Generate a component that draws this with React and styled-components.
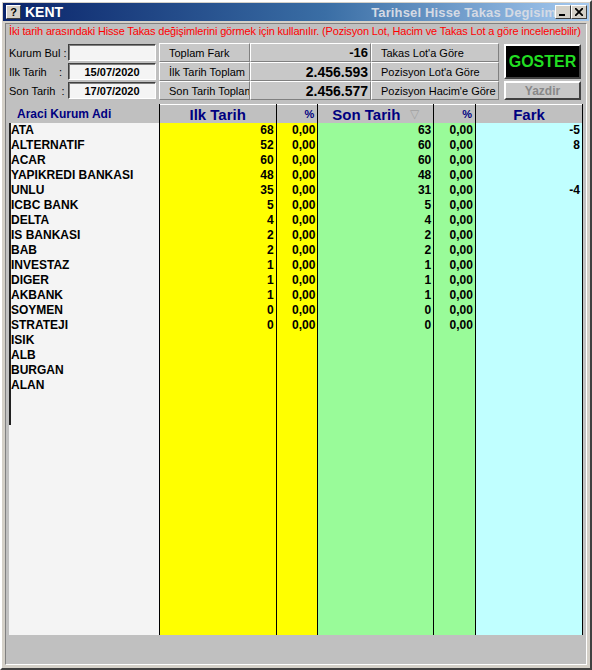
import React from 'react'
import styled, { createGlobalStyle } from 'styled-components'

const Global = createGlobalStyle`
  body{
    margin:0;
    background:#c0c0c0;
    font-family:"Liberation Sans", Arial, sans-serif;
  }
`

const rows = [
  ['ATA', '68', '0,00', '63', '0,00', '-5'],
  ['ALTERNATIF', '52', '0,00', '60', '0,00', '8'],
  ['ACAR', '60', '0,00', '60', '0,00', ''],
  ['YAPIKREDI BANKASI', '48', '0,00', '48', '0,00', ''],
  ['UNLU', '35', '0,00', '31', '0,00', '-4'],
  ['ICBC BANK', '5', '0,00', '5', '0,00', ''],
  ['DELTA', '4', '0,00', '4', '0,00', ''],
  ['IS BANKASI', '2', '0,00', '2', '0,00', ''],
  ['BAB', '2', '0,00', '2', '0,00', ''],
  ['INVESTAZ', '1', '0,00', '1', '0,00', ''],
  ['DIGER', '1', '0,00', '1', '0,00', ''],
  ['AKBANK', '1', '0,00', '1', '0,00', ''],
  ['SOYMEN', '0', '0,00', '0', '0,00', ''],
  ['STRATEJI', '0', '0,00', '0', '0,00', ''],
  ['ISIK', '', '', '', '', ''],
  ['ALB', '', '', '', '', ''],
  ['BURGAN', '', '', '', '', ''],
  ['ALAN', '', '', '', '', ''],
]

const columns = [
  { title: 'Ilk Tarih', width: 117, bg: '#ffff00', big: true },
  { title: '%', width: 41, bg: '#ffff00' },
  { title: 'Son Tarih', width: 116, bg: '#99fb99', big: true, sort: true },
  { title: '%', width: 41, bg: '#99fb99' },
  { title: 'Fark', width: 107, bg: '#c0ffff', big: true, last: true },
]

const App = () => {
  return (
    <Window>
      <Global />
      <TitleBar>
        <HelpIcon>?</HelpIcon>
        <AppName>KENT</AppName>
        <Caption>Tarihsel Hisse Takas Degisimi</Caption>
        <WinButtons>
          <WinBtn>
            <svg width="8" height="8" viewBox="0 0 8 8"><rect x="0" y="6" width="6" height="2" fill="#000" /></svg>
          </WinBtn>
          <WinBtn>
            <svg width="8" height="8" viewBox="0 0 8 8"><path d="M0 0L8 8M8 0L0 8" stroke="#000" strokeWidth="1.8" /></svg>
          </WinBtn>
        </WinButtons>
      </TitleBar>
      <Body>
        <Hint>İki tarih arasındaki Hisse Takas değişimlerini görmek için kullanılır. (Pozisyon Lot, Hacim ve Takas Lot a göre incelenebilir)</Hint>
        <Controls>
          <Label>Kurum Bul :</Label>
          <Input />
          <Btn>Toplam Fark</Btn>
          <Value small>-16</Value>
          <Btn>Takas Lot'a Göre</Btn>
          <Goster>GOSTER</Goster>

          <Label>Ilk Tarih&nbsp;&nbsp;&nbsp;&nbsp;:</Label>
          <Input>15/07/2020</Input>
          <Btn>İlk Tarih Toplam</Btn>
          <Value>2.456.593</Value>
          <Btn>Pozisyon Lot'a Göre</Btn>

          <Label>Son Tarih&nbsp;&nbsp;:</Label>
          <Input>17/07/2020</Input>
          <Btn>Son Tarih Toplam</Btn>
          <Value>2.456.577</Value>
          <Btn>Pozisyon Hacim'e Göre</Btn>
          <Yazdir>Yazdir</Yazdir>
        </Controls>
        <Table>
          <NameCol>
            <NameHead>Araci Kurum Adi</NameHead>
            <NameList>
              {rows.map((r) => (
                <NameCell key={r[0]}>{r[0]}</NameCell>
              ))}
            </NameList>
          </NameCol>
          {columns.map((c, i) => (
            <Col key={i} $w={c.width} $bg={c.bg} $last={c.last}>
              <Head $big={c.big} $right={!c.big}>
                {c.title}
                {c.sort && <SortMark>▽</SortMark>}
              </Head>
              {rows.map((r) => (
                <Cell key={r[0]}>{r[i + 1]}</Cell>
              ))}
            </Col>
          ))}
        </Table>
      </Body>
    </Window>
  )
}

export default App

const Window = styled.div`
  width:592px;
  height:670px;
  box-sizing:border-box;
  background:#d4d0c8;
  border:2px solid;
  border-color:#ffffff #404040 #404040 #ffffff;
  padding:1px;
  display:flex;
  flex-direction:column;
  overflow:hidden;
`
const TitleBar = styled.div`
  height:18px;
  display:flex;
  align-items:center;
  background:linear-gradient(to right,#0a246a 0%,#3a6ea5 55%,#a6caf0 100%);
  padding:0 2px 0 3px;
  position:relative;
`
const HelpIcon = styled.div`
  width:13px;
  height:12px;
  background:#d4d0c8;
  border:1px solid #fff;
  border-right-color:#404040;
  border-bottom-color:#404040;
  font:bold 11px "Liberation Sans", Arial, sans-serif;
  color:#000;
  display:flex;
  align-items:center;
  justify-content:center;
  margin-right:4px;
`
const AppName = styled.div`
  color:#fff;
  font:bold 14px "Liberation Sans", Arial, sans-serif;
`
const Caption = styled.div`
  flex:1;
  text-align:right;
  color:#d4dae4;
  font:bold 13px "Liberation Sans", Arial, sans-serif;
  letter-spacing:0.15px;
  white-space:nowrap;
  overflow:hidden;
  margin-right:-5px;
`
const WinButtons = styled.div`
  display:flex;
  position:relative;
  z-index:1;
`
const WinBtn = styled.div`
  width:14px;
  height:12px;
  background:#d4d0c8;
  border:1px solid;
  border-color:#fff #404040 #404040 #fff;
  display:flex;
  align-items:center;
  justify-content:center;
`
const Body = styled.div`
  flex:1;
  margin:2px 2px 2px 2px;
  border:1px solid;
  border-color:#808080 #fff #fff #808080;
  background:#c0c0c0;
  display:flex;
  flex-direction:column;
  padding:0 3px 29px 3px;
  min-height:0;
`
const Hint = styled.div`
  color:#ff0000;
  font-size:11px;
  white-space:nowrap;
  height:16px;
  line-height:15px;
  letter-spacing:-0.16px;
  overflow:hidden;
`
const Controls = styled.div`
  display:grid;
  grid-template-columns:59px 91px 91px 121px 128px 82px;
  grid-template-rows:19px 19px 19px;
  margin-top:3px;
  align-items:stretch;
`
const Label = styled.div`
  font-size:11px;
  color:#000;
  display:flex;
  align-items:center;
  white-space:pre;
`
const Input = styled.div`
  margin:1px 3px 1px 0;
  background:#f4f4f4;
  border:1px solid;
  border-color:#404040 #fff #fff #404040;
  box-shadow:inset 1px 1px 0 #808080;
  font:bold 11px "Liberation Sans", Arial, sans-serif;
  display:flex;
  align-items:center;
  justify-content:center;
`
const Btn = styled.div`
  background:#c8c8c8;
  border:1px solid;
  border-color:#fff #808080 #808080 #fff;
  font-size:11px;
  display:flex;
  align-items:center;
  padding-left:9px;
  white-space:nowrap;
  overflow:hidden;
`
const Value = styled.div`
  background:#c8c8c8;
  border:1px solid;
  border-color:#fff #808080 #808080 #fff;
  font:bold ${(p) => (p.small ? '13px' : '14px')} "Liberation Sans", Arial, sans-serif;
  display:flex;
  align-items:center;
  justify-content:flex-end;
  padding-right:2px;
`
const Goster = styled.div`
  grid-column:6;
  grid-row:1 / span 2;
  margin:1px 0 2px 5px;
  background:#000;
  border:2px solid;
  border-color:#fff #404040 #404040 #fff;
  color:#22dd22;
  font:bold 16px "Liberation Sans", Arial, sans-serif;
  display:flex;
  align-items:center;
  justify-content:center;
`
const Yazdir = styled.div`
  grid-column:6;
  grid-row:3;
  margin:0 0 0 5px;
  background:#c8c8c8;
  border:2px solid;
  border-color:#fff #404040 #404040 #fff;
  color:#888;
  font:bold 12px "Liberation Sans", Arial, sans-serif;
  display:flex;
  align-items:center;
  justify-content:center;
`
const Table = styled.div`
  flex:1;
  display:flex;
  margin-top:4px;
`
const NameCol = styled.div`
  width:151px;
  display:flex;
  flex-direction:column;
  background:#f4f4f4;
`
const NameHead = styled.div`
  height:19px;
  background:#c0c0c0;
  color:#000080;
  font:bold 12px "Liberation Sans", Arial, sans-serif;
  display:flex;
  align-items:center;
  padding-left:8px;
`
const NameList = styled.div`
  border-left:2px solid #202020;
  padding-bottom:32px;
  align-self:flex-start;
  width:100%;
`
const NameCell = styled.div`
  height:15px;
  line-height:15px;
  font:bold 12px "Liberation Sans", Arial, sans-serif;
  white-space:nowrap;
`
const Col = styled.div`
  width:${(p) => p.$w}px;
  background:${(p) => p.$bg};
  border-left:1px solid #000;
  border-right:${(p) => (p.$last ? '1px solid #000' : 'none')};
  display:flex;
  flex-direction:column;
`
const Head = styled.div`
  height:19px;
  background:#c0c0c0;
  border-top:1px solid #fff;
  box-sizing:border-box;
  color:#000080;
  font:bold ${(p) => (p.$big ? '15px' : '11px')} "Liberation Sans", Arial, sans-serif;
  display:flex;
  align-items:center;
  justify-content:${(p) => (p.$right ? 'flex-end' : 'center')};
  padding-right:${(p) => (p.$right ? '3px' : '0')};
`
const SortMark = styled.span`
  color:#a0a0a0;
  font-size:12px;
  font-weight:normal;
  margin-left:10px;
`
const Cell = styled.div`
  height:15px;
  line-height:15px;
  text-align:right;
  padding-right:2px;
  font:bold 12px "Liberation Sans", Arial, sans-serif;
`
